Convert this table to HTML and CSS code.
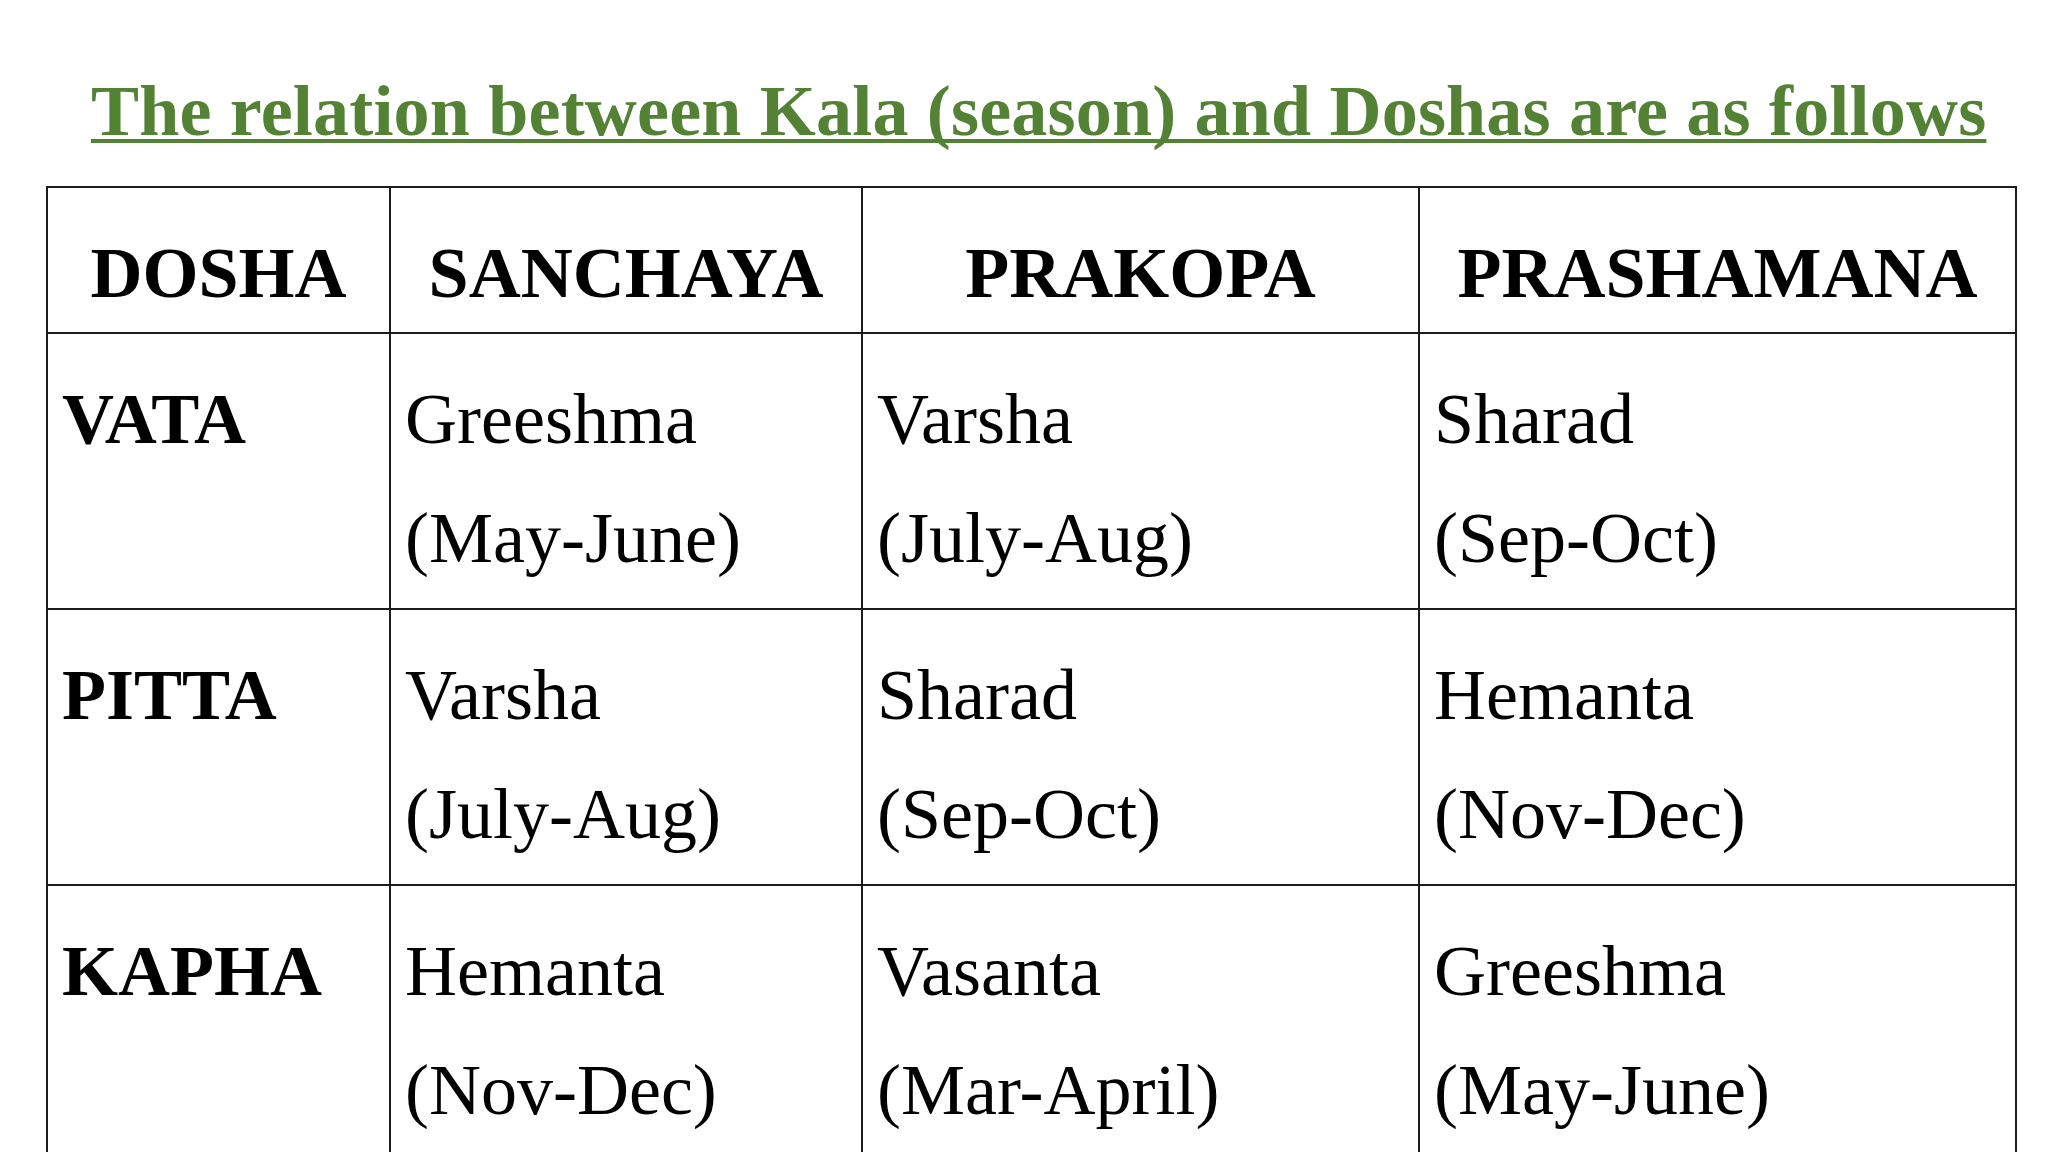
FILE: index.html
```html
<!DOCTYPE html>
<html lang="en">
<head>
<meta charset="utf-8">
<title>Kala and Doshas</title>
<link rel="stylesheet" href="styles.css">
</head>
<body>
<main class="slide">
  <h1 class="title">The relation between Kala (season) and Doshas are as follows</h1>
  <div class="grid">
    <div class="cell head">DOSHA</div>
    <div class="cell head">SANCHAYA</div>
    <div class="cell head">PRAKOPA</div>
    <div class="cell head">PRASHAMANA</div>

    <div class="cell dosha">VATA</div>
    <div class="cell">Greeshma<br>(May-June)</div>
    <div class="cell">Varsha<br>(July-Aug)</div>
    <div class="cell">Sharad<br>(Sep-Oct)</div>

    <div class="cell dosha">PITTA</div>
    <div class="cell">Varsha<br>(July-Aug)</div>
    <div class="cell">Sharad<br>(Sep-Oct)</div>
    <div class="cell">Hemanta<br>(Nov-Dec)</div>

    <div class="cell dosha">KAPHA</div>
    <div class="cell">Hemanta<br>(Nov-Dec)</div>
    <div class="cell">Vasanta<br>(Mar-April)</div>
    <div class="cell">Greeshma<br>(May-June)</div>
  </div>
</main>
</body>
</html>
```
FILE: styles.css
```css
html, body {
  margin: 0;
  padding: 0;
  background: #ffffff;
  overflow: hidden;
}

body {
  width: 2048px;
  height: 1152px;
  font-family: "Liberation Serif", "Times New Roman", serif;
  color: #000000;
}

.slide {
  padding-top: 71px;
}

.title {
  margin: 0 0 0 91px;
  font-size: 72px;
  line-height: 80px;
  font-weight: bold;
  letter-spacing: 0.2px;
  color: #548235;
  text-decoration: underline;
  text-decoration-thickness: 4px;
  text-underline-offset: 4px;
  text-decoration-skip-ink: none;
  white-space: nowrap;
}

.grid {
  margin: 35px 0 0 46px;
  display: grid;
  grid-template-columns: 343px 472px 557px 597px;
  grid-template-rows: 146px 276px 276px 276px;
  width: max-content;
  border-left: 2px solid #1c1c1c;
  border-top: 2px solid #1c1c1c;
}

.cell {
  box-sizing: border-box;
  border-right: 2px solid #1c1c1c;
  border-bottom: 2px solid #1c1c1c;
  padding: 26px 0 0 14px;
  font-size: 72px;
  line-height: 119px;
  white-space: nowrap;
}

.head {
  font-weight: bold;
  text-align: center;
  padding-left: 0;
}

.dosha {
  font-weight: bold;
}
```
